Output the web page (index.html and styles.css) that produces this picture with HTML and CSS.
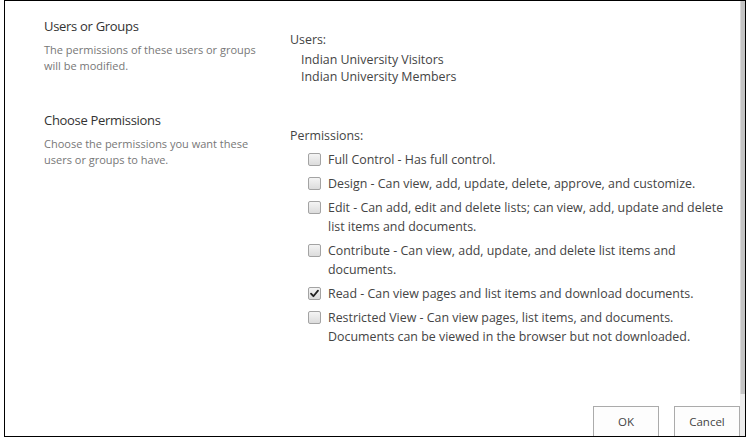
FILE: index.html
```html
<!DOCTYPE html>
<html>
<head>
<meta charset="utf-8">
<link rel="stylesheet" href="styles.css">
</head>
<body>
<div class="frame">
  <div class="pane">
    <div class="content">
      <section class="row row-users">
        <div class="label-col">
          <h2 class="label-title">Users or Groups</h2>
          <p class="label-desc">The permissions of these users or groups will be modified.</p>
        </div>
        <div class="field-col">
          <div class="field-title">Users:</div>
          <ul class="user-list">
            <li>Indian University Visitors</li>
            <li>Indian University Members</li>
          </ul>
        </div>
      </section>
      <section class="row row-perms">
        <div class="label-col">
          <h2 class="label-title">Choose Permissions</h2>
          <p class="label-desc">Choose the permissions you want these users or groups to have.</p>
        </div>
        <div class="field-col">
          <div class="field-title">Permissions:</div>
          <ul class="perm-list">
            <li class="perm"><span class="cb"></span><span class="perm-text">Full Control - Has full control.</span></li>
            <li class="perm"><span class="cb"></span><span class="perm-text">Design - Can view, add, update, delete, approve, and customize.</span></li>
            <li class="perm"><span class="cb"></span><span class="perm-text">Edit - Can add, edit and delete lists; can view, add, update and delete list items and documents.</span></li>
            <li class="perm"><span class="cb"></span><span class="perm-text">Contribute - Can view, add, update, and delete list items and documents.</span></li>
            <li class="perm"><span class="cb cb-checked"><svg viewBox="0 0 13 13" width="13" height="13"><path d="M3 6.6 L5.4 9.2 L10 3.6" fill="none" stroke="#222" stroke-width="1.8" stroke-linecap="round" stroke-linejoin="round"/></svg></span><span class="perm-text">Read - Can view pages and list items and download documents.</span></li>
            <li class="perm"><span class="cb"></span><span class="perm-text">Restricted View - Can view pages, list items, and documents. Documents can be viewed in the browser but not downloaded.</span></li>
          </ul>
        </div>
      </section>
      <div class="spacer"></div>
      <div class="actions">
        <button class="btn">OK</button>
        <button class="btn">Cancel</button>
      </div>
    </div>
    <div class="scrollbar"><div class="thumb"></div></div>
  </div>
</div>
</body>
</html>
```
FILE: styles.css
```css
html, body {
  margin: 0;
  padding: 0;
  background: #fff;
}
body {
  font-family: "Open Sans", "Noto Sans", sans-serif;
  color: #444;
}
.frame {
  margin-left: 4px;
  width: 740px;
  height: 435px;
  border: 1px solid #000;
}
.pane {
  display: flex;
  height: 100%;
}
.content {
  flex: 1;
  display: flex;
  flex-direction: column;
}
.scrollbar {
  width: 5px;
  background: #ececec;
  display: flex;
  flex-direction: column;
}
.thumb {
  height: 393px;
  background: #c4c4c4;
  border-left: 1px solid #dadada;
}
.row {
  display: flex;
}
.row-users {
  padding-top: 16px;
}
.row-perms {
  margin-top: 26px;
}
.label-col {
  width: 246px;
  padding-left: 39px;
  flex: none;
}
.label-title {
  margin: 0;
  font-size: 13px;
  font-weight: 400;
  letter-spacing: -0.3px;
  line-height: 19px;
  color: #333;
}
.label-desc {
  margin: 6px 0 0;
  font-size: 11px;
  line-height: 16px;
  color: #777;
  width: 222px;
}
.field-col {
  flex: 1;
  padding-top: 14px;
  font-size: 12.4px;
  line-height: 17px;
}
.row-perms .field-col {
  padding-top: 16px;
}
.field-title {
  color: #444;
}
.user-list {
  list-style: none;
  margin: 3px 0 0;
  padding: 0 0 0 11px;
}
.perm-list {
  list-style: none;
  margin: 6px 0 0;
  padding: 0 10px 0 18px;
  display: flex;
  flex-direction: column;
  gap: 5px;
}
.perm {
  display: flex;
  align-items: flex-start;
  line-height: 19px;
}
.cb {
  flex: none;
  width: 11px;
  height: 11px;
  margin-top: 3px;
  margin-right: 7px;
  border: 1px solid #a3a3a3;
  border-radius: 2px;
  background: linear-gradient(#f4f4f4, #dcdcdc);
  position: relative;
}
.cb svg {
  position: absolute;
  left: -1px;
  top: -1px;
}
.spacer {
  flex: 1;
}
.actions {
  display: flex;
  justify-content: flex-end;
  gap: 15px;
}
.btn {
  width: 66px;
  height: 30px;
  border: 1px solid #ababab;
  border-bottom: none;
  background: #fdfdfd;
  font-family: "Open Sans", "Noto Sans", sans-serif;
  font-size: 11.5px;
  color: #444;
  padding: 0;
  margin: 0;
}
```
